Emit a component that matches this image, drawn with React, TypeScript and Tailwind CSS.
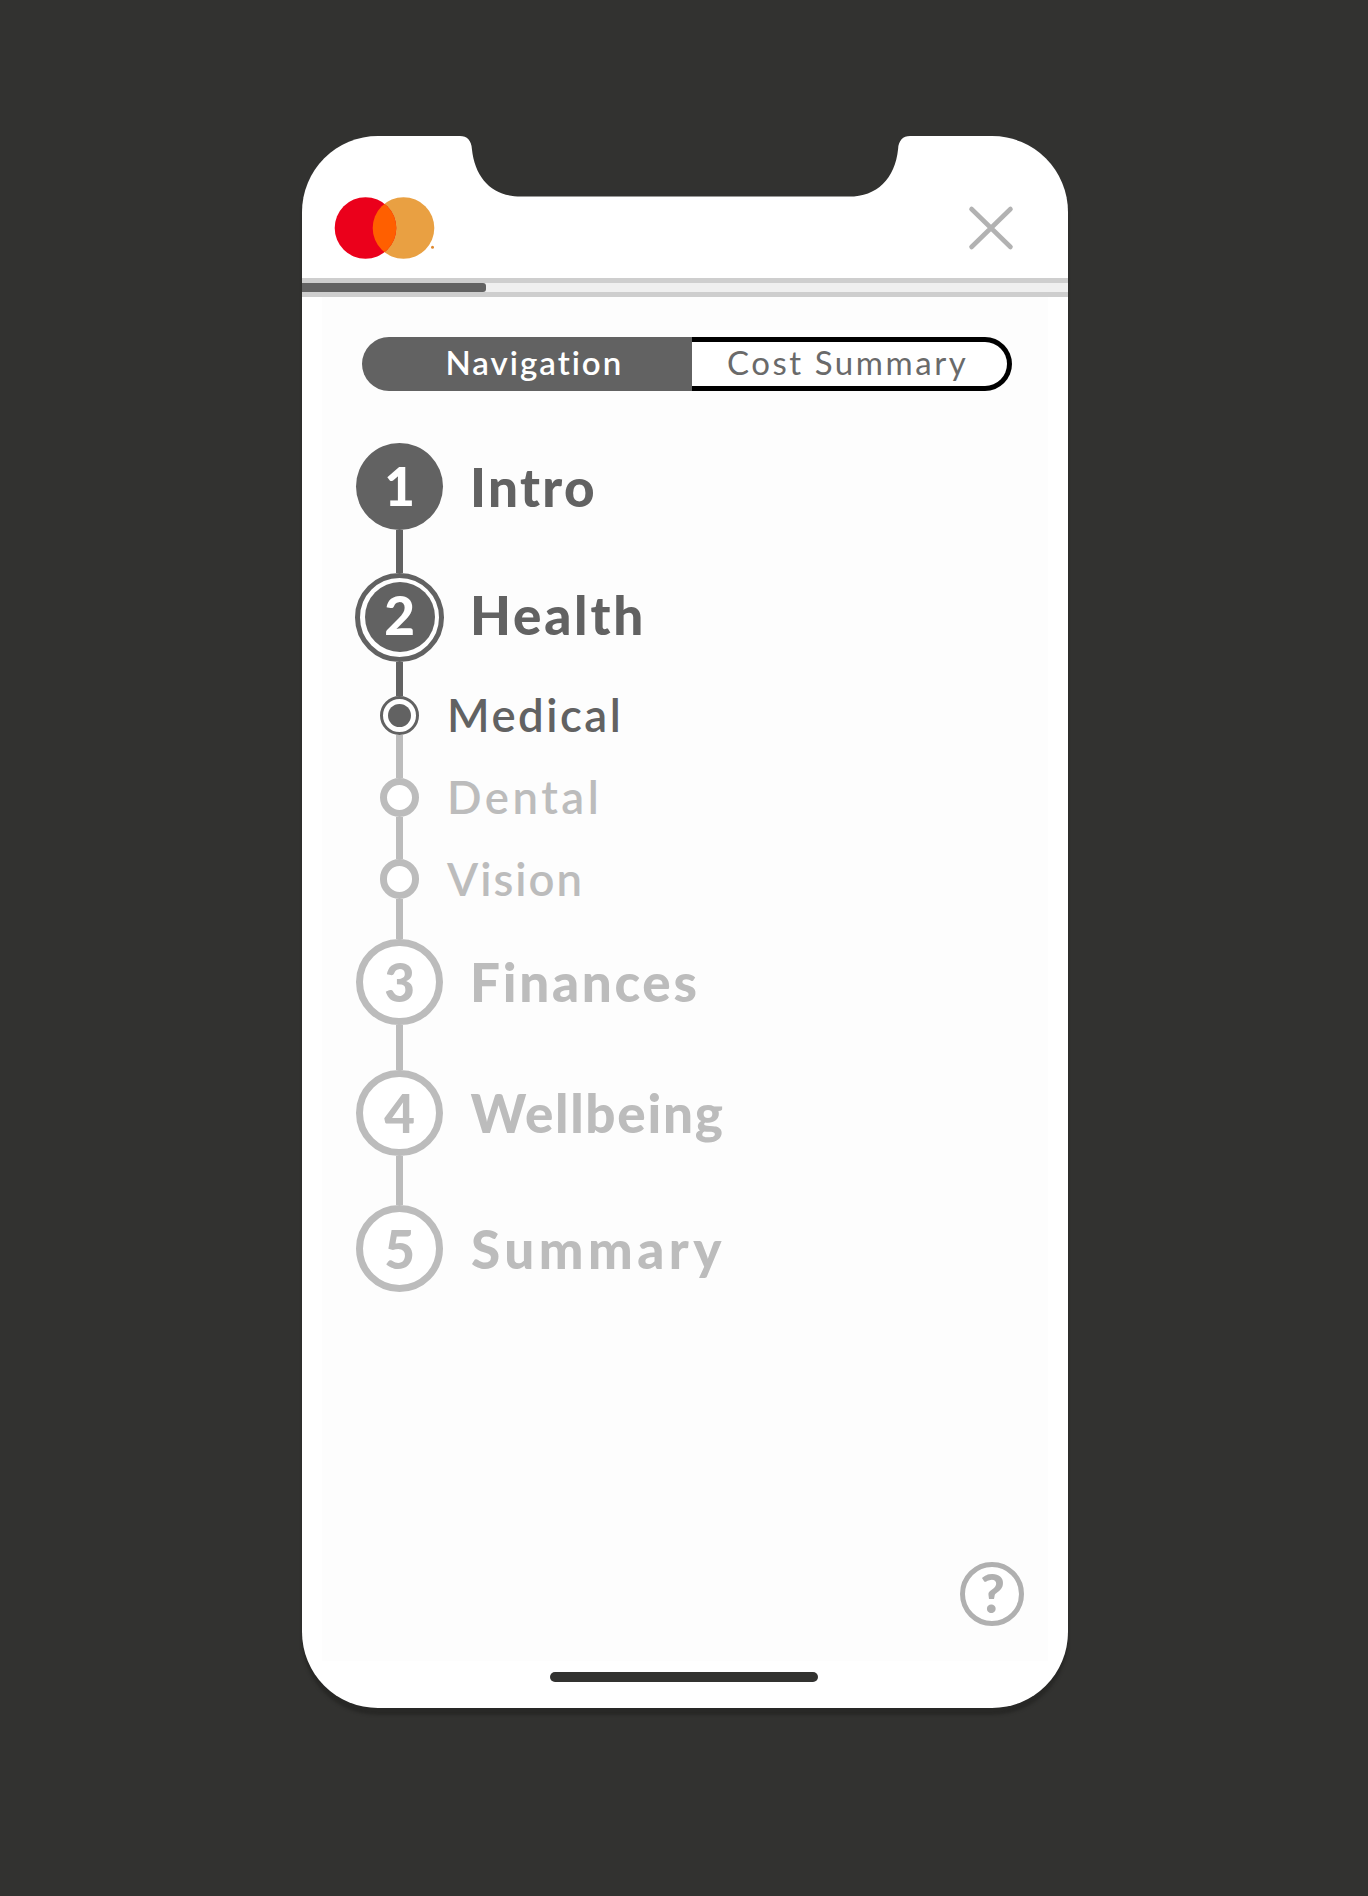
import clsx from "clsx";

function Logo() {
  return (
    <svg viewBox="0 0 102 64" className="h-16 w-[102px]" aria-label="Brand logo">
      <defs>
        <clipPath id="left-disc">
          <circle cx="32.5" cy="32" r="30.8" />
        </clipPath>
      </defs>
      <circle cx="70.5" cy="32" r="30.8" fill="#e9a042" />
      <circle cx="32.5" cy="32" r="30.8" fill="#eb001b" />
      <circle cx="70.5" cy="32" r="30.8" fill="#ff5f00" clipPath="url(#left-disc)" />
      <circle cx="99.5" cy="51.3" r="1.5" fill="#e08a30" />
    </svg>
  );
}

function Notch() {
  return (
    <svg
      viewBox="0 0 450 63"
      className="absolute top-[-2px] left-[158px] h-[63px] w-[450px]"
      fill="#323230"
      aria-hidden="true"
    >
      <path d="M0 0V2C7 2 11.5 6.5 11.9 15C15 45 33 62.6 61 62.6H389C417 62.6 435 45 438.1 15C438.5 6.5 443 2 450 2V0Z" />
    </svg>
  );
}

function Badge({ label, state }: { label: string; state: "done" | "current" | "todo" }) {
  if (state === "current") {
    return (
      <div className="flex size-[89px] items-center justify-center rounded-full border-[5px] border-[#626262] bg-white">
        <div className="flex size-[70px] items-center justify-center rounded-full bg-[#626262] pb-[6px] text-[53px] leading-none font-black text-white">
          {label}
        </div>
      </div>
    );
  }
  return (
    <div
      className={clsx(
        "flex size-[86.5px] items-center justify-center rounded-full text-[53px] leading-none font-black",
        state === "done" ? "bg-[#626262] pb-px text-white" : "border-[7px] border-[#bcbcbc] bg-white text-[#bcbcbc]",
      )}
    >
      {label}
    </div>
  );
}

function Step({
  number,
  title,
  state,
  titleClass,
}: {
  number: string;
  title: string;
  state: "done" | "current" | "todo";
  titleClass: string;
}) {
  return (
    <div className="flex items-center">
      <div className="flex w-[89px] shrink-0 justify-center">
        <Badge label={number} state={state} />
      </div>
      <div
        className={clsx(
          "text-[53px] leading-none font-black whitespace-nowrap",
          state === "todo" ? "text-[#bcbcbc]" : "text-[#626262]",
          titleClass,
        )}
      >
        {title}
      </div>
    </div>
  );
}

function SubStep({ title, active, titleClass }: { title: string; active?: boolean; titleClass: string }) {
  return (
    <div className="flex h-[39.5px] items-center">
      <div className="flex w-[89px] shrink-0 justify-center">
        {active ? (
          <div className="flex size-[39.5px] items-center justify-center rounded-full border-[3px] border-[#626262] bg-white">
            <div className="size-[23.5px] rounded-full bg-[#626262]" />
          </div>
        ) : (
          <div className="size-[39.5px] rounded-full border-[7px] border-[#bcbcbc] bg-white" />
        )}
      </div>
      <div
        className={clsx(
          "pb-px text-[45.5px] leading-none font-semibold whitespace-nowrap",
          active ? "text-[#626262]" : "text-[#bcbcbc]",
          titleClass,
        )}
      >
        {title}
      </div>
    </div>
  );
}

function Line({ className }: { className: string }) {
  return (
    <div className="flex w-[89px] justify-center">
      <div className={clsx("w-[7px]", className)} />
    </div>
  );
}

export default function App() {
  return (
    <div className="flex h-[1896px] w-[1368px] justify-center bg-[#323230] pt-[136px] font-['Lato',sans-serif]">
      <div className="relative ml-[2px] flex h-[1571.5px] w-[766px] flex-col rounded-[76px] bg-white shadow-[0_7px_3px_#282826]">
        <Notch />

        <header className="flex h-[142px] shrink-0 items-start justify-between pt-[60px] pr-[53px] pl-[30.5px]">
          <Logo />
          <button aria-label="Close" className="mt-[8px]">
            <svg viewBox="0 0 48 48" className="size-12" stroke="#b2b2b2" strokeWidth="4.6" strokeLinecap="round">
              <path d="M4.5 5L43.5 43M43.5 5L4.5 43" />
            </svg>
          </button>
        </header>

        <div className="h-[19px] shrink-0 border-y-[5px] border-[#cecece] bg-[#efefef]">
          <div className="h-[9px] w-[184px] rounded-r-[3px] bg-[#626262]" />
        </div>

        <main className="mx-5 flex h-[1364px] shrink-0 flex-col bg-[#fdfdfd] pt-[39.5px] pl-[33px]">
          <div className="ml-[7px] flex h-[54px] w-[649.5px] text-[33px] leading-none">
            <button className="flex w-[329.5px] items-center rounded-l-[27px] bg-[#626262] pb-[3px] pl-[83.5px] font-semibold tracking-[2px] whitespace-nowrap text-white">
              Navigation
            </button>
            <button className="flex flex-1 items-center rounded-r-[27px] border-y-[5px] border-r-[5px] border-black bg-white pb-[3px] pl-[35.5px] tracking-[2.55px] whitespace-nowrap text-[#6a6a6a]">
              Cost Summary
            </button>
          </div>

          <nav className="mt-[52.5px] flex flex-col">
            <Step number="1" title="Intro" state="done" titleClass="pl-[26px] tracking-[2.3px]" />
            <Line className="h-[43px] bg-[#626262]" />
            <Step number="2" title="Health" state="current" titleClass="pl-[26px] pb-[5px] tracking-[2.8px]" />
            <Line className="h-[34px] bg-[#626262]" />
            <SubStep title="Medical" active titleClass="pl-[3px] tracking-[2.5px]" />
            <Line className="h-[42.5px] bg-[#bcbcbc]" />
            <SubStep title="Dental" titleClass="pl-[3px] tracking-[3.5px]" />
            <Line className="h-[42px] bg-[#bcbcbc]" />
            <SubStep title="Vision" titleClass="pl-[3px] tracking-[2px]" />
            <Line className="h-[40px] bg-[#bcbcbc]" />
            <Step number="3" title="Finances" state="todo" titleClass="pl-[26px] pb-px tracking-[2.7px]" />
            <Line className="h-[44.5px] bg-[#bcbcbc]" />
            <Step number="4" title="Wellbeing" state="todo" titleClass="pl-[26.5px] pb-px tracking-[1.7px]" />
            <Line className="h-[49px] bg-[#bcbcbc]" />
            <Step number="5" title="Summary" state="todo" titleClass="pl-[27px] tracking-[4.5px]" />
          </nav>

          <button
            aria-label="Help"
            className="mt-auto mr-[24px] mb-[35.5px] flex size-[64px] items-center justify-center self-end rounded-full border-[5px] border-[#b0b0b0] bg-white pb-[3px] pl-px text-[53px] leading-none font-black text-[#b0b0b0]"
          >
            ?
          </button>
        </main>

        <div className="mt-[11px] ml-[248px] h-[10px] w-[268px] rounded-full bg-[#323230]" />
      </div>
    </div>
  );
}
